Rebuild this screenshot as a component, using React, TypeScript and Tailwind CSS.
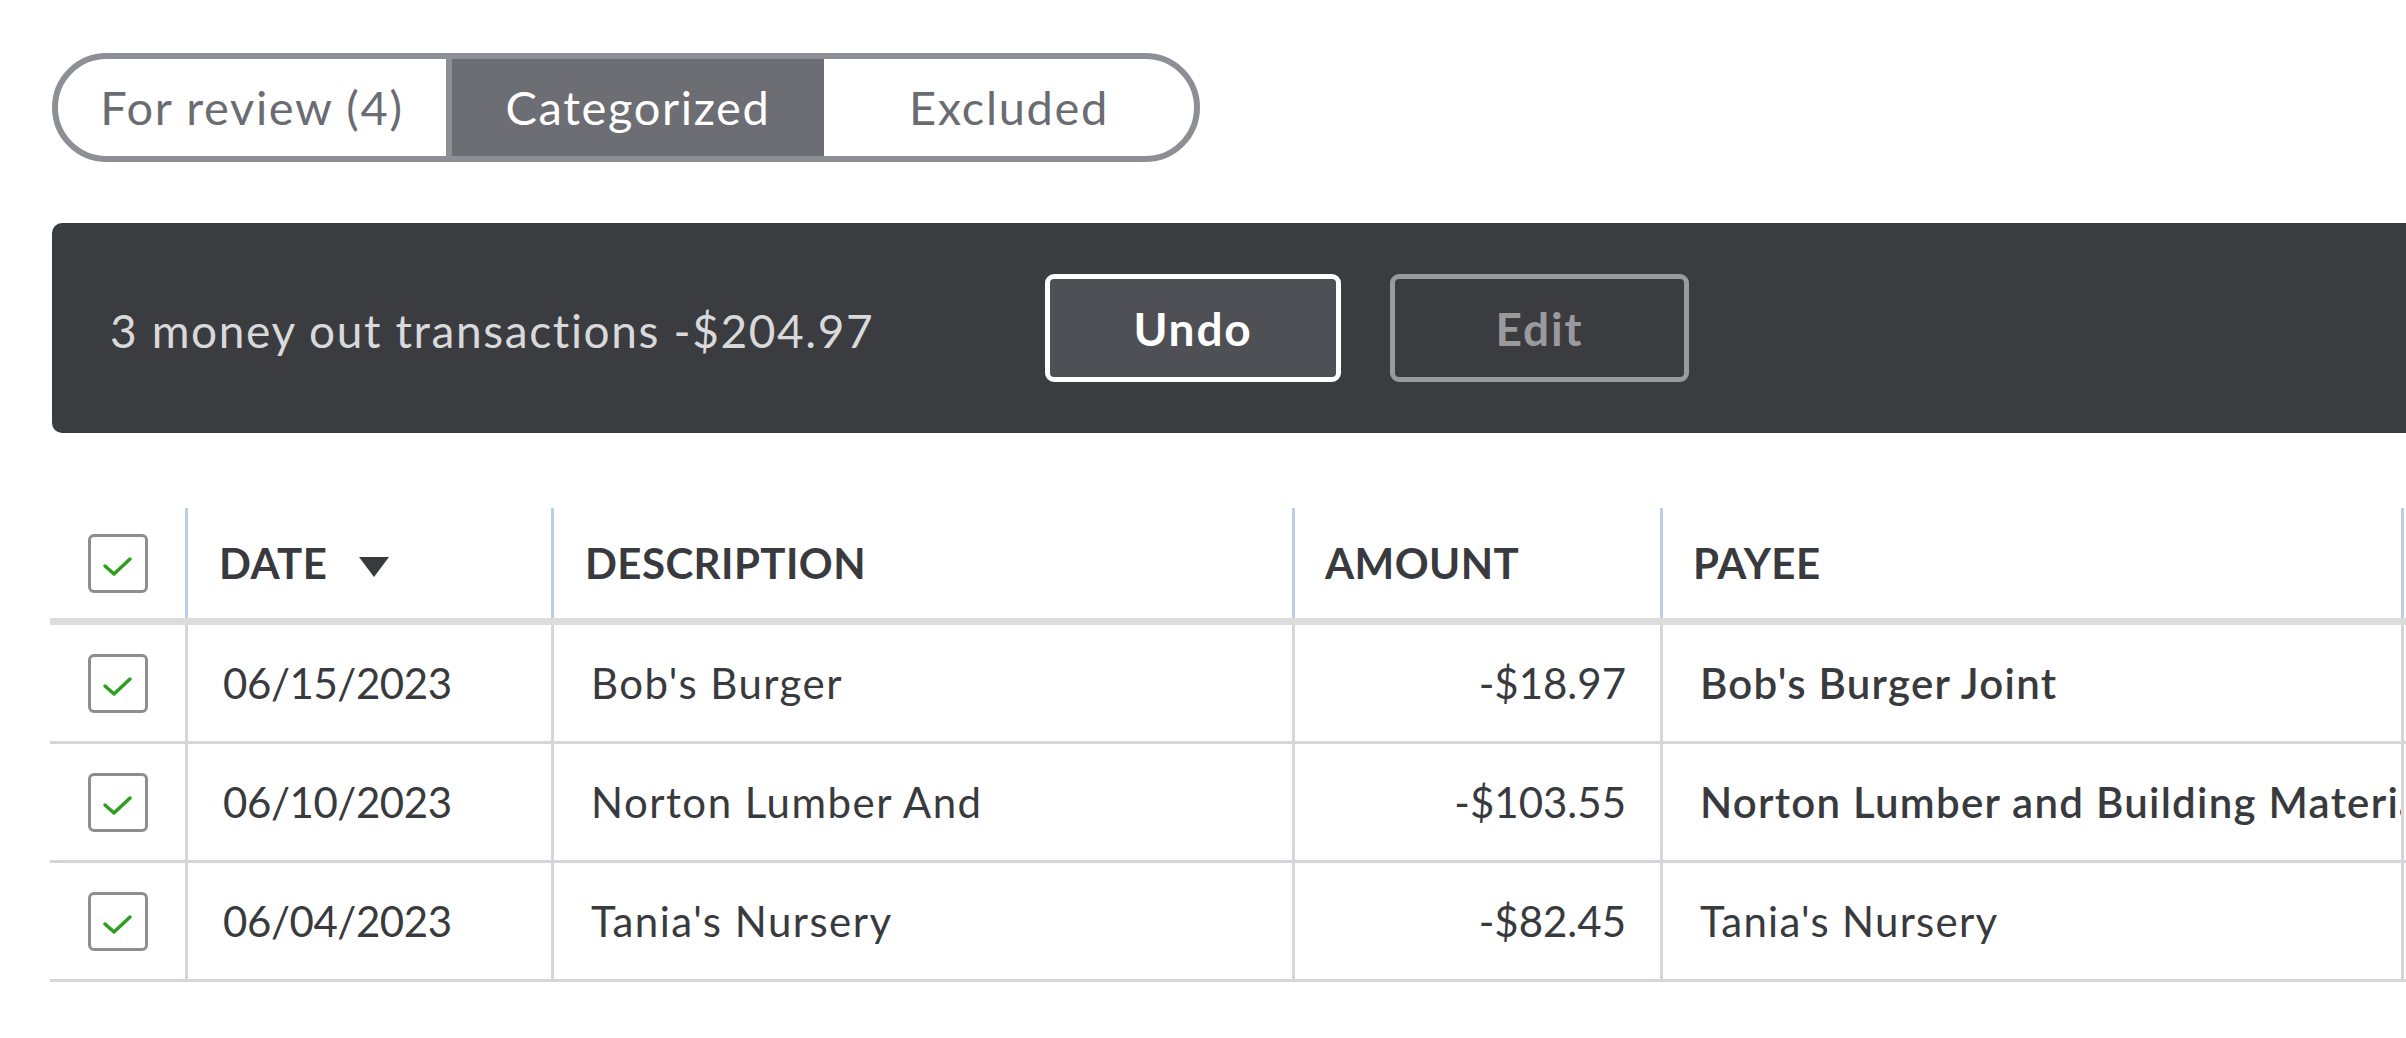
import React from "react";

type Row = { date: string; desc: string; amount: string; payee: string; strong?: boolean };

const rows: Row[] = [
    { date: "06/15/2023", desc: "Bob's Burger", amount: "-$18.97", payee: "Bob's Burger Joint", strong: true },
    { date: "06/10/2023", desc: "Norton Lumber And", amount: "-$103.55", payee: "Norton Lumber and Building Materials", strong: true },
    { date: "06/04/2023", desc: "Tania's Nursery", amount: "-$82.45", payee: "Tania's Nursery" },
];

function CheckBox() {
    return (
        <div className="h-[59px] w-[60px] rounded-[6px] border-[3px] border-[#8d8d92] bg-white">
            <svg viewBox="0 0 54 53" className="h-full w-full">
                <path d="M14 29 L23 37 L39 22" fill="none" stroke="#2ca01c" strokeWidth="3.5" strokeLinecap="round" strokeLinejoin="round" />
            </svg>
        </div>
    );
}

export default function App() {
    return (
        <div className="h-[1038px] w-[2406px] overflow-hidden bg-white pl-[50px] pt-[53px] font-['Lato',sans-serif] text-[#393a3d]">
            {/* tabs */}
            <div className="ml-[2px] flex h-[109px] w-[1148px] overflow-hidden rounded-full border-[6px] border-[#8e8f94] text-[47px] leading-none tracking-[0.035em]">
                <div className="flex w-[388px] items-center justify-center text-[#6b6c72]">For review (4)</div>
                <div className="flex w-[378px] items-center justify-center border-l-[6px] border-[#8e8f94] bg-[#6d6e73] text-white">Categorized</div>
                <div className="flex w-[370px] items-center justify-center text-[#6b6c72]">Excluded</div>
            </div>

            {/* batch banner */}
            <div className="ml-[2px] mt-[61px] flex h-[210px] w-[2400px] items-center rounded-l-[10px] bg-[#3b3c40] pl-[58px]">
                <span className="mt-[4px] w-[935px] text-[46px] tracking-[0.035em] text-[#d9d9db]">3 money out transactions -$204.97</span>
                <button className="flex h-[108px] w-[296px] items-center justify-center rounded-[9px] border-[5px] border-white bg-[#4f5055] text-[46px] font-bold tracking-[0.04em] text-white">Undo</button>
                <button className="ml-[49px] flex h-[108px] w-[299px] items-center justify-center rounded-[9px] border-[5px] border-[#9a9a9c] text-[46px] font-bold tracking-[0.04em] text-[#9a9a9c]">Edit</button>
            </div>

            {/* table */}
            <div className="mt-[75px] w-[2420px] text-[42px]">
                <div className="flex h-[117px] border-b-[7px] border-[#dcdcdc] font-bold tracking-[0.01em]">
                    <div className="flex w-[138px] items-center justify-center border-r-[3px] border-[#bccde6]"><CheckBox /></div>
                    <div className="flex w-[366px] items-center border-r-[3px] border-[#bccde6] pl-[31px]">
                        DATE
                        <svg viewBox="0 0 30 20" className="ml-[32px] mt-[8px] h-[20px] w-[30px]"><path d="M0 0 H30 L15 20 Z" fill="#393a3d" /></svg>
                    </div>
                    <div className="flex w-[741px] items-center border-r-[3px] border-[#bccde6] pl-[31px]">DESCRIPTION</div>
                    <div className="flex w-[368px] items-center border-r-[3px] border-[#bccde6] pl-[30px]">AMOUNT</div>
                    <div className="flex w-[741px] items-center border-r-[3px] border-[#bccde6] pl-[30px]">PAYEE</div>
                    <div className="w-[60px]" />
                </div>
                {rows.map((r) => (
                    <div key={r.date} className="flex h-[119px] border-b-[3px] border-[#d5d5da]">
                        <div className="flex w-[138px] items-center justify-center border-r-[3px] border-[#d5d5da]"><CheckBox /></div>
                        <div className="flex w-[366px] items-center border-r-[3px] border-[#d5d5da] pl-[35px] tracking-[-0.01em]">{r.date}</div>
                        <div className="flex w-[741px] items-center border-r-[3px] border-[#d5d5da] pl-[37px] tracking-[0.035em]">{r.desc}</div>
                        <div className="flex w-[368px] items-center justify-end border-r-[3px] border-[#d5d5da] pr-[34px]">{r.amount}</div>
                        <div className={`flex w-[741px] items-center overflow-hidden whitespace-nowrap border-r-[3px] border-[#d5d5da] pl-[37px] tracking-[0.03em] ${r.strong ? "font-semibold" : ""}`}>{r.payee}</div>
                        <div className="w-[60px]" />
                    </div>
                ))}
            </div>
        </div>
    );
}
